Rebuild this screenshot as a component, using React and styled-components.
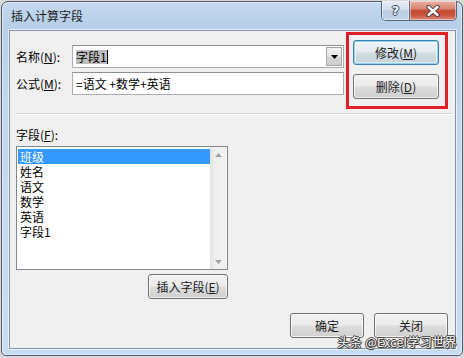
import React from "react";
import styled, { createGlobalStyle } from "styled-components";

const Global = createGlobalStyle`
  html, body { margin: 0; padding: 0; background: #d9d9d9; }
  body {
    font-family: "Noto Sans CJK SC", "Microsoft YaHei", sans-serif;
    font-size: 12px;
    color: #000;
  }
  * { box-sizing: border-box; }
`;

const Window = styled.div`
  position: relative;
  margin: 1px 0 0 1px;
  width: 462px;
  height: 355px;
  border: 1px solid #4d5766;
  border-radius: 7px 7px 5px 5px;
  background: linear-gradient(180deg, #c6daef 0%, #b7cfe9 6%, #c2d7ee 30%, #c8dcf1 100%);
  box-shadow: inset 0 0 0 1px rgba(255, 255, 255, 0.55);
  padding: 0 6px 6px 7px;
  display: flex;
  flex-direction: column;
`;

const TitleBar = styled.div`
  height: 28px;
  display: flex;
  align-items: flex-start;
  justify-content: space-between;
`;

const Title = styled.div`
  padding-left: 2px;
  line-height: 28px;
  font-size: 12px;
  color: #1b1b1b;
`;

const CaptionButtons = styled.div`
  display: flex;
  margin-top: -1px;
  margin-right: -1px;
  height: 20px;
  border: 1px solid #56667b;
  border-top: none;
  border-radius: 0 0 5px 5px;
  overflow: hidden;
`;

const CaptionButton = styled.div`
  width: ${(p) => p.$w}px;
  height: 100%;
  display: flex;
  align-items: center;
  justify-content: center;
  background: ${(p) =>
    p.$close
      ? "linear-gradient(180deg, #eab0a3 0%, #d98471 40%, #c5472f 52%, #c9563f 75%, #dd8b76 100%)"
      : "linear-gradient(180deg, #e6eef7 0%, #d3dfec 45%, #b9cbe0 52%, #c4d5e8 100%)"};
  border-left: ${(p) => (p.$close ? "1px solid #56667b" : "none")};
  box-shadow: inset 0 0 0 1px rgba(255, 255, 255, 0.45);
`;

const HelpGlyph = styled.span`
  font-family: "DejaVu Sans", sans-serif;
  font-weight: bold;
  font-size: 13px;
  line-height: 1;
  color: #f4f7fb;
  text-shadow: 0 0 1px #2f3d50, 1px 0 0 #3f4d60, -1px 0 0 #3f4d60, 0 1px 0 #3f4d60, 0 -1px 0 #3f4d60;
`;

const Content = styled.div`
  position: relative;
  flex: 1;
  background: #f0f0f0;
  border: 1px solid #8093a9;
  box-shadow: 0 0 0 1px rgba(255, 255, 255, 0.6);
  display: flex;
  flex-direction: column;
`;

const TopRow = styled.div`
  display: flex;
  align-items: flex-start;
  padding: 1px 0 0 6px;
`;

const FormGrid = styled.div`
  margin-top: 13px;
  display: grid;
  grid-template-columns: 56px 272px;
  row-gap: 4px;
  align-items: center;
`;

const Label = styled.div`
  line-height: 16px;
  white-space: nowrap;
`;

const Key = styled.span`
  text-decoration: underline;
  text-underline-offset: 1px;
`;

const TextBox = styled.div`
  height: 23px;
  display: flex;
  align-items: center;
  background: #fff;
  border: 1px solid #abadb3;
  border-top-color: #8e8f8f;
  padding-left: 3px;
  line-height: 16px;
`;

const Selected = styled.span`
  background: #bdbdbd;
  line-height: 14px;
`;

const Caret = styled.span`
  display: inline-block;
  width: 1px;
  height: 14px;
  background: #000;
`;

const Grow = styled.div`
  flex: 1;
  display: flex;
  align-items: center;
`;

const DropButton = styled.div`
  width: 16px;
  height: 19px;
  margin-right: 1px;
  border: 1px solid #a6a6a6;
  background: linear-gradient(180deg, #f3f3f3 0%, #e4e4e4 50%, #d6d6d6 51%, #cfcfcf 100%);
  display: flex;
  align-items: center;
  justify-content: center;
`;

const RedBox = styled.div`
  margin-left: 2px;
  width: 102px;
  height: 77px;
  border: 3px solid #e01f27;
  padding: 5px 0 0 4px;
  display: flex;
  flex-direction: column;
  gap: 9px;
`;

const Button = styled.div`
  width: ${(p) => p.$w}px;
  height: 25px;
  display: flex;
  align-items: center;
  justify-content: center;
  border: 1px solid ${(p) => (p.$focus ? "#3c7fb1" : "#707070")};
  border-radius: 3px;
  background: ${(p) =>
    p.$focus
      ? "linear-gradient(180deg, #eef3f6 0%, #e4ebf0 48%, #d2dce3 52%, #c8d3db 100%)"
      : "linear-gradient(180deg, #f2f2f2 0%, #ebebeb 48%, #dddddd 52%, #cfcfcf 100%)"};
  box-shadow: ${(p) =>
    p.$focus
      ? "inset 0 0 0 1px #8fd3f3, inset 0 0 0 2px rgba(255,255,255,0.5)"
      : "inset 0 0 0 1px rgba(255,255,255,0.75)"};
  line-height: 16px;
  color: #1a1a1a;
`;

const Separator = styled.div`
  margin: 4px 2px 0 6px;
  border-top: 1px solid #d5d5d5;
  border-bottom: 1px solid #ffffff;
`;

const FieldsLabel = styled(Label)`
  margin: 12px 0 0 6px;
`;

const ListBox = styled.div`
  margin: 3px 0 0 6px;
  width: 212px;
  height: 124px;
  border: 1px solid #828790;
  background: #fff;
  display: flex;
`;

const Items = styled.div`
  flex: 1;
  padding: 2px 0 0 1px;
`;

const Item = styled.div`
  height: 15px;
  line-height: 15px;
  padding-left: 2px;
  background: ${(p) => (p.$selected ? "#3399ff" : "transparent")};
  color: ${(p) => (p.$selected ? "#fff" : "#000")};
`;

const ScrollBar = styled.div`
  width: 17px;
  background: linear-gradient(90deg, #e3e3e3 0%, #efefef 30%, #f2f2f2 100%);
  display: flex;
  flex-direction: column;
  align-items: center;
  justify-content: space-between;
  padding: 6px 0 5px;
`;

const InsertRow = styled.div`
  margin: 4px 0 0 6px;
  width: 212px;
  display: flex;
  justify-content: flex-end;
`;

const BottomRow = styled.div`
  margin-top: 14px;
  padding-right: 7px;
  display: flex;
  justify-content: flex-end;
  gap: 10px;
`;

const Watermark = styled.div`
  position: absolute;
  right: 5px;
  bottom: 5px;
  font-size: 12px;
  line-height: 16px;
  letter-spacing: 0.4px;
  color: #ffffff;
  white-space: nowrap;
  text-shadow: 1px 0 0 #3a3a3a, -1px 0 0 #3a3a3a, 0 1px 0 #3a3a3a, 0 -1px 0 #3a3a3a, 1px 1px 1px #222;
`;

const fields = ["班级", "姓名", "语文", "数学", "英语", "字段1"];

const Arrow = ({ up, color = "#000" }) => (
  <svg width="7" height="4" viewBox="0 0 7 4">
    <path d={up ? "M0 4 L3.5 0 L7 4 Z" : "M0 0 L7 0 L3.5 4 Z"} fill={color} />
  </svg>
);

export default function App() {
  return (
    <>
      <Global />
      <Window>
        <TitleBar>
          <Title>插入计算字段</Title>
          <CaptionButtons>
            <CaptionButton $w={27}>
              <HelpGlyph>?</HelpGlyph>
            </CaptionButton>
            <CaptionButton $w={47} $close>
              <svg width="14" height="12" viewBox="0 0 14 12">
                <path d="M2.5 2 L11.5 10 M11.5 2 L2.5 10" stroke="#3b3f48" strokeWidth="4.2" strokeLinecap="round" />
                <path d="M2.5 2 L11.5 10 M11.5 2 L2.5 10" stroke="#ffffff" strokeWidth="2.4" strokeLinecap="round" />
              </svg>
            </CaptionButton>
          </CaptionButtons>
        </TitleBar>
        <Content>
          <TopRow>
            <FormGrid>
              <Label>
                名称(<Key>N</Key>):
              </Label>
              <TextBox>
                <Grow>
                  <Selected>字段1</Selected>
                  <Caret />
                </Grow>
                <DropButton>
                  <Arrow />
                </DropButton>
              </TextBox>
              <Label>
                公式(<Key>M</Key>):
              </Label>
              <TextBox>=语文 +数学+英语</TextBox>
            </FormGrid>
            <RedBox>
              <Button $w={86} $focus>
                修改(<Key>M</Key>)
              </Button>
              <Button $w={86}>
                删除(<Key>D</Key>)
              </Button>
            </RedBox>
          </TopRow>
          <Separator />
          <FieldsLabel>
            字段(<Key>F</Key>):
          </FieldsLabel>
          <ListBox>
            <Items>
              {fields.map((f, i) => (
                <Item key={f} $selected={i === 0}>
                  {f}
                </Item>
              ))}
            </Items>
            <ScrollBar>
              <Arrow up color="#a3a3a3" />
              <Arrow color="#a3a3a3" />
            </ScrollBar>
          </ListBox>
          <InsertRow>
            <Button $w={80}>
              插入字段(<Key>E</Key>)
            </Button>
          </InsertRow>
          <BottomRow>
            <Button $w={74}>确定</Button>
            <Button $w={74}>关闭</Button>
          </BottomRow>
        </Content>
        <Watermark>头条 @Excel学习世界</Watermark>
      </Window>
    </>
  );
}
